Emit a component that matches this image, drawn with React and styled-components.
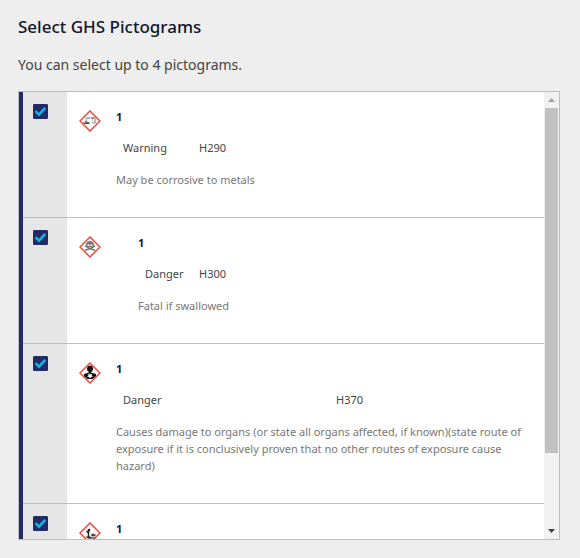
import React, { useEffect, useRef, useState } from 'react';
import styled, { createGlobalStyle } from 'styled-components';

const GlobalStyle = createGlobalStyle`
  * {
    box-sizing: border-box;
  }

  body {
    margin: 0;
    background: #eeeeee;
    color: #444444;
    font-family: 'Noto Sans', 'Open Sans', sans-serif;
  }
`;

const Page = styled.main`
  display: flex;
  flex-direction: column;
  height: 100vh;
  padding: 15px 20px 18px 18px;
`;

const Title = styled.h1`
  margin: 0 0 14px;
  font-size: 17px;
  font-weight: 500;
  line-height: 24px;
  color: #11162b;
`;

const Hint = styled.p`
  margin: 0 0 14px;
  font-size: 14px;
  line-height: 24px;
`;

const Panel = styled.div`
  display: flex;
  flex: 1;
  min-height: 0;
  border: 1px solid #bbbbca;
`;

const List = styled.ul`
  flex: 1;
  margin: 0;
  padding: 0;
  overflow-y: auto;
  scrollbar-width: none;
  list-style: none;
  background: #ffffff;
`;

const Row = styled.li`
  display: flex;
  min-height: 126px;
  border-left: 4px solid ${props => (props.$selected ? '#222b66' : '#e6e6e6')};
  box-shadow: inset 0 -1px #bbbbca;
`;

const CheckCell = styled.div`
  flex: none;
  width: 44px;
  padding: 12px 0 0 10px;
  background: #e6e6e6;
  box-shadow: inset 0 -1px #bbbbca;
`;

const CheckBox = styled.span`
  display: grid;
  width: 15px;
  height: 15px;

  > * {
    grid-area: 1 / 1;
  }

  svg {
    pointer-events: none;
  }
`;

const CheckInput = styled.input`
  appearance: none;
  width: 15px;
  height: 15px;
  margin: 0;
  border: 1px solid #222b66;
  border-radius: 1px;
  background: #ffffff;
  cursor: pointer;

  &:checked {
    background: #222b66;
  }
`;

const IconCell = styled.div`
  flex: none;
  width: 49px;
  padding: 18px 0 0 12px;

  svg {
    display: block;
  }
`;

const Details = styled.div`
  flex: 1;
  min-width: 0;
  padding: 16px 20px 30px ${props => (props.$indented ? '22px' : '0')};
  font-size: 11px;
  line-height: 17px;
`;

const Count = styled.label`
  display: block;
  font-weight: 700;
  color: #11162b;
`;

const Codes = styled.div`
  display: flex;
  padding: 14px 0 15px 7px;
`;

const Signal = styled.span`
  flex: none;
  width: ${props => props.$width}px;
`;

const Description = styled.p`
  margin: 0;
  color: #777777;
`;

const ScrollBar = styled.div`
  display: flex;
  flex-direction: column;
  flex: none;
  width: 15px;
  background: #f1f1f1;
`;

const ScrollButton = styled.button`
  display: grid;
  place-items: center;
  height: 16px;
  padding: 0;
  border: none;
  background: none;
  color: ${props => (props.$dim ? '#a0a0a0' : '#444444')};
`;

const Track = styled.div`
  flex: 1;
  padding: 0 1px;
`;

const Thumb = styled.div`
  background: #c1c1c1;
`;

const Pictogram = ({ children }) => (
    <svg width="22" height="22" viewBox="0 0 44 44" aria-hidden="true">
        <path d="M22 2 42 22 22 42 2 22Z" fill="#fff" stroke="#ee4a3c" strokeWidth="3" />
        {children}
    </svg>
);

const Corrosive = () => (
    <Pictogram>
        <path d="m13 15 9-1 1 3-9 2Z" fill="#aaa" />
        <path d="m22 15 10-1 2 3-9 1Z" fill="#888" />
        <path d="M14 19v5M32 18v6M27 19v2" stroke="#777" strokeWidth="2" />
        <path d="M8 25h13v3H10Z" fill="#444" />
        <path d="m12 22 6 1 3 3h-9Z" fill="#777" />
        <path d="M25 24h10l-2 3h-6Z" fill="#aaa" />
    </Pictogram>
);

const Skull = () => (
    <Pictogram>
        <path d="m12 20 20 9M32 20l-20 9" stroke="#777" strokeWidth="3" />
        <path d="M22 10c-5 0-8 3-8 7 0 3 1 5 4 6v4h8v-4c3-1 4-3 4-6 0-4-3-7-8-7Z" fill="#777" />
        <path d="M17 17h4v3h-4ZM23 17h4v3h-4ZM21 22h2v2h-2Z" fill="#fff" />
    </Pictogram>
);

const HealthHazard = () => (
    <Pictogram>
        <path d="M22 7c-4 0-6 3-6 6s1 6 4 7v1l-10 3v4l7 6h10l7-6v-4l-10-3v-1c3-1 4-4 4-7s-2-6-6-6Z" fill="#111" />
        <path d="m22 22 1 3 4-1-2 3 3 2-4 1-2 3-2-3-4-1 3-2-2-3 4 1Z" fill="#fff" />
    </Pictogram>
);

const Environment = () => (
    <Pictogram>
        <path d="M19 31V14M19 22l-4-4M19 19l3-5" fill="none" stroke="#222" strokeWidth="3" />
        <path d="M13 29h9l4 2h6v2H18Z" fill="#222" />
        <path d="M24 26c2-4 5-4 7-1l2-2v6l-3-1c-2 2-5 1-6-2Z" fill="#444" />
    </Pictogram>
);

const pictograms = [
    { id: 'corrosive', Icon: Corrosive, signal: 'Warning', code: 'H290', signalWidth: 76, text: 'May be corrosive to metals' },
    { id: 'toxic', Icon: Skull, signal: 'Danger', code: 'H300', signalWidth: 54, indented: true, text: 'Fatal if swallowed' },
    {
        id: 'health',
        Icon: HealthHazard,
        signal: 'Danger',
        code: 'H370',
        signalWidth: 213,
        text: 'Causes damage to organs (or state all organs affected, if known)(state route of exposure if it is conclusively proven that no other routes of exposure cause hazard)',
    },
    { id: 'environment', Icon: Environment },
];

const PictogramRow = ({ item }) => {
    const [selected, setSelected] = useState(true);

    return (
        <Row $selected={selected}>
            <CheckCell>
                <CheckBox>
                    <CheckInput
                        type="checkbox"
                        id={item.id}
                        checked={selected}
                        onChange={() => setSelected(!selected)}
                    />
                    {selected && (
                        <svg width="15" height="15" viewBox="0 0 15 15" aria-hidden="true">
                            <path d="m2.5 7.2 3.4 3.4L12.2 4" fill="none" stroke="#10b5e6" strokeWidth="2.6" />
                        </svg>
                    )}
                </CheckBox>
            </CheckCell>
            <IconCell>
                <item.Icon />
            </IconCell>
            <Details $indented={item.indented}>
                <Count htmlFor={item.id}>1</Count>
                {item.code && (
                    <Codes>
                        <Signal $width={item.signalWidth}>{item.signal}</Signal>
                        <span>{item.code}</span>
                    </Codes>
                )}
                {item.text && <Description>{item.text}</Description>}
            </Details>
        </Row>
    );
};

const App = () => {
    const listRef = useRef(null);
    const [thumb, setThumb] = useState({ top: 0, size: 1 });

    const measure = () => {
        const list = listRef.current;
        setThumb({
            top: list.scrollTop / list.scrollHeight,
            size: list.clientHeight / list.scrollHeight,
        });
    };

    useEffect(() => {
        measure();
        window.addEventListener('resize', measure);
        return () => window.removeEventListener('resize', measure);
    }, []);

    const scroll = (amount) => listRef.current.scrollBy({ top: amount });

    return (
        <Page>
            <GlobalStyle />
            <Title>Select GHS Pictograms</Title>
            <Hint>You can select up to 4 pictograms.</Hint>
            <Panel>
                <List ref={listRef} onScroll={measure}>
                    {pictograms.map(item => <PictogramRow key={item.id} item={item} />)}
                </List>
                <ScrollBar>
                    <ScrollButton type="button" aria-label="Scroll up" $dim={thumb.top === 0} onClick={() => scroll(-40)}>
                        <svg width="7" height="4" viewBox="0 0 7 4"><path d="M0 4 3.5 0 7 4Z" fill="currentColor" /></svg>
                    </ScrollButton>
                    <Track>
                        <div style={{ height: `${thumb.top * 100}%` }} />
                        <Thumb style={{ height: `${thumb.size * 100}%` }} />
                    </Track>
                    <ScrollButton type="button" aria-label="Scroll down" onClick={() => scroll(40)}>
                        <svg width="7" height="4" viewBox="0 0 7 4"><path d="M0 0h7L3.5 4Z" fill="currentColor" /></svg>
                    </ScrollButton>
                </ScrollBar>
            </Panel>
        </Page>
    );
};

export default App;
